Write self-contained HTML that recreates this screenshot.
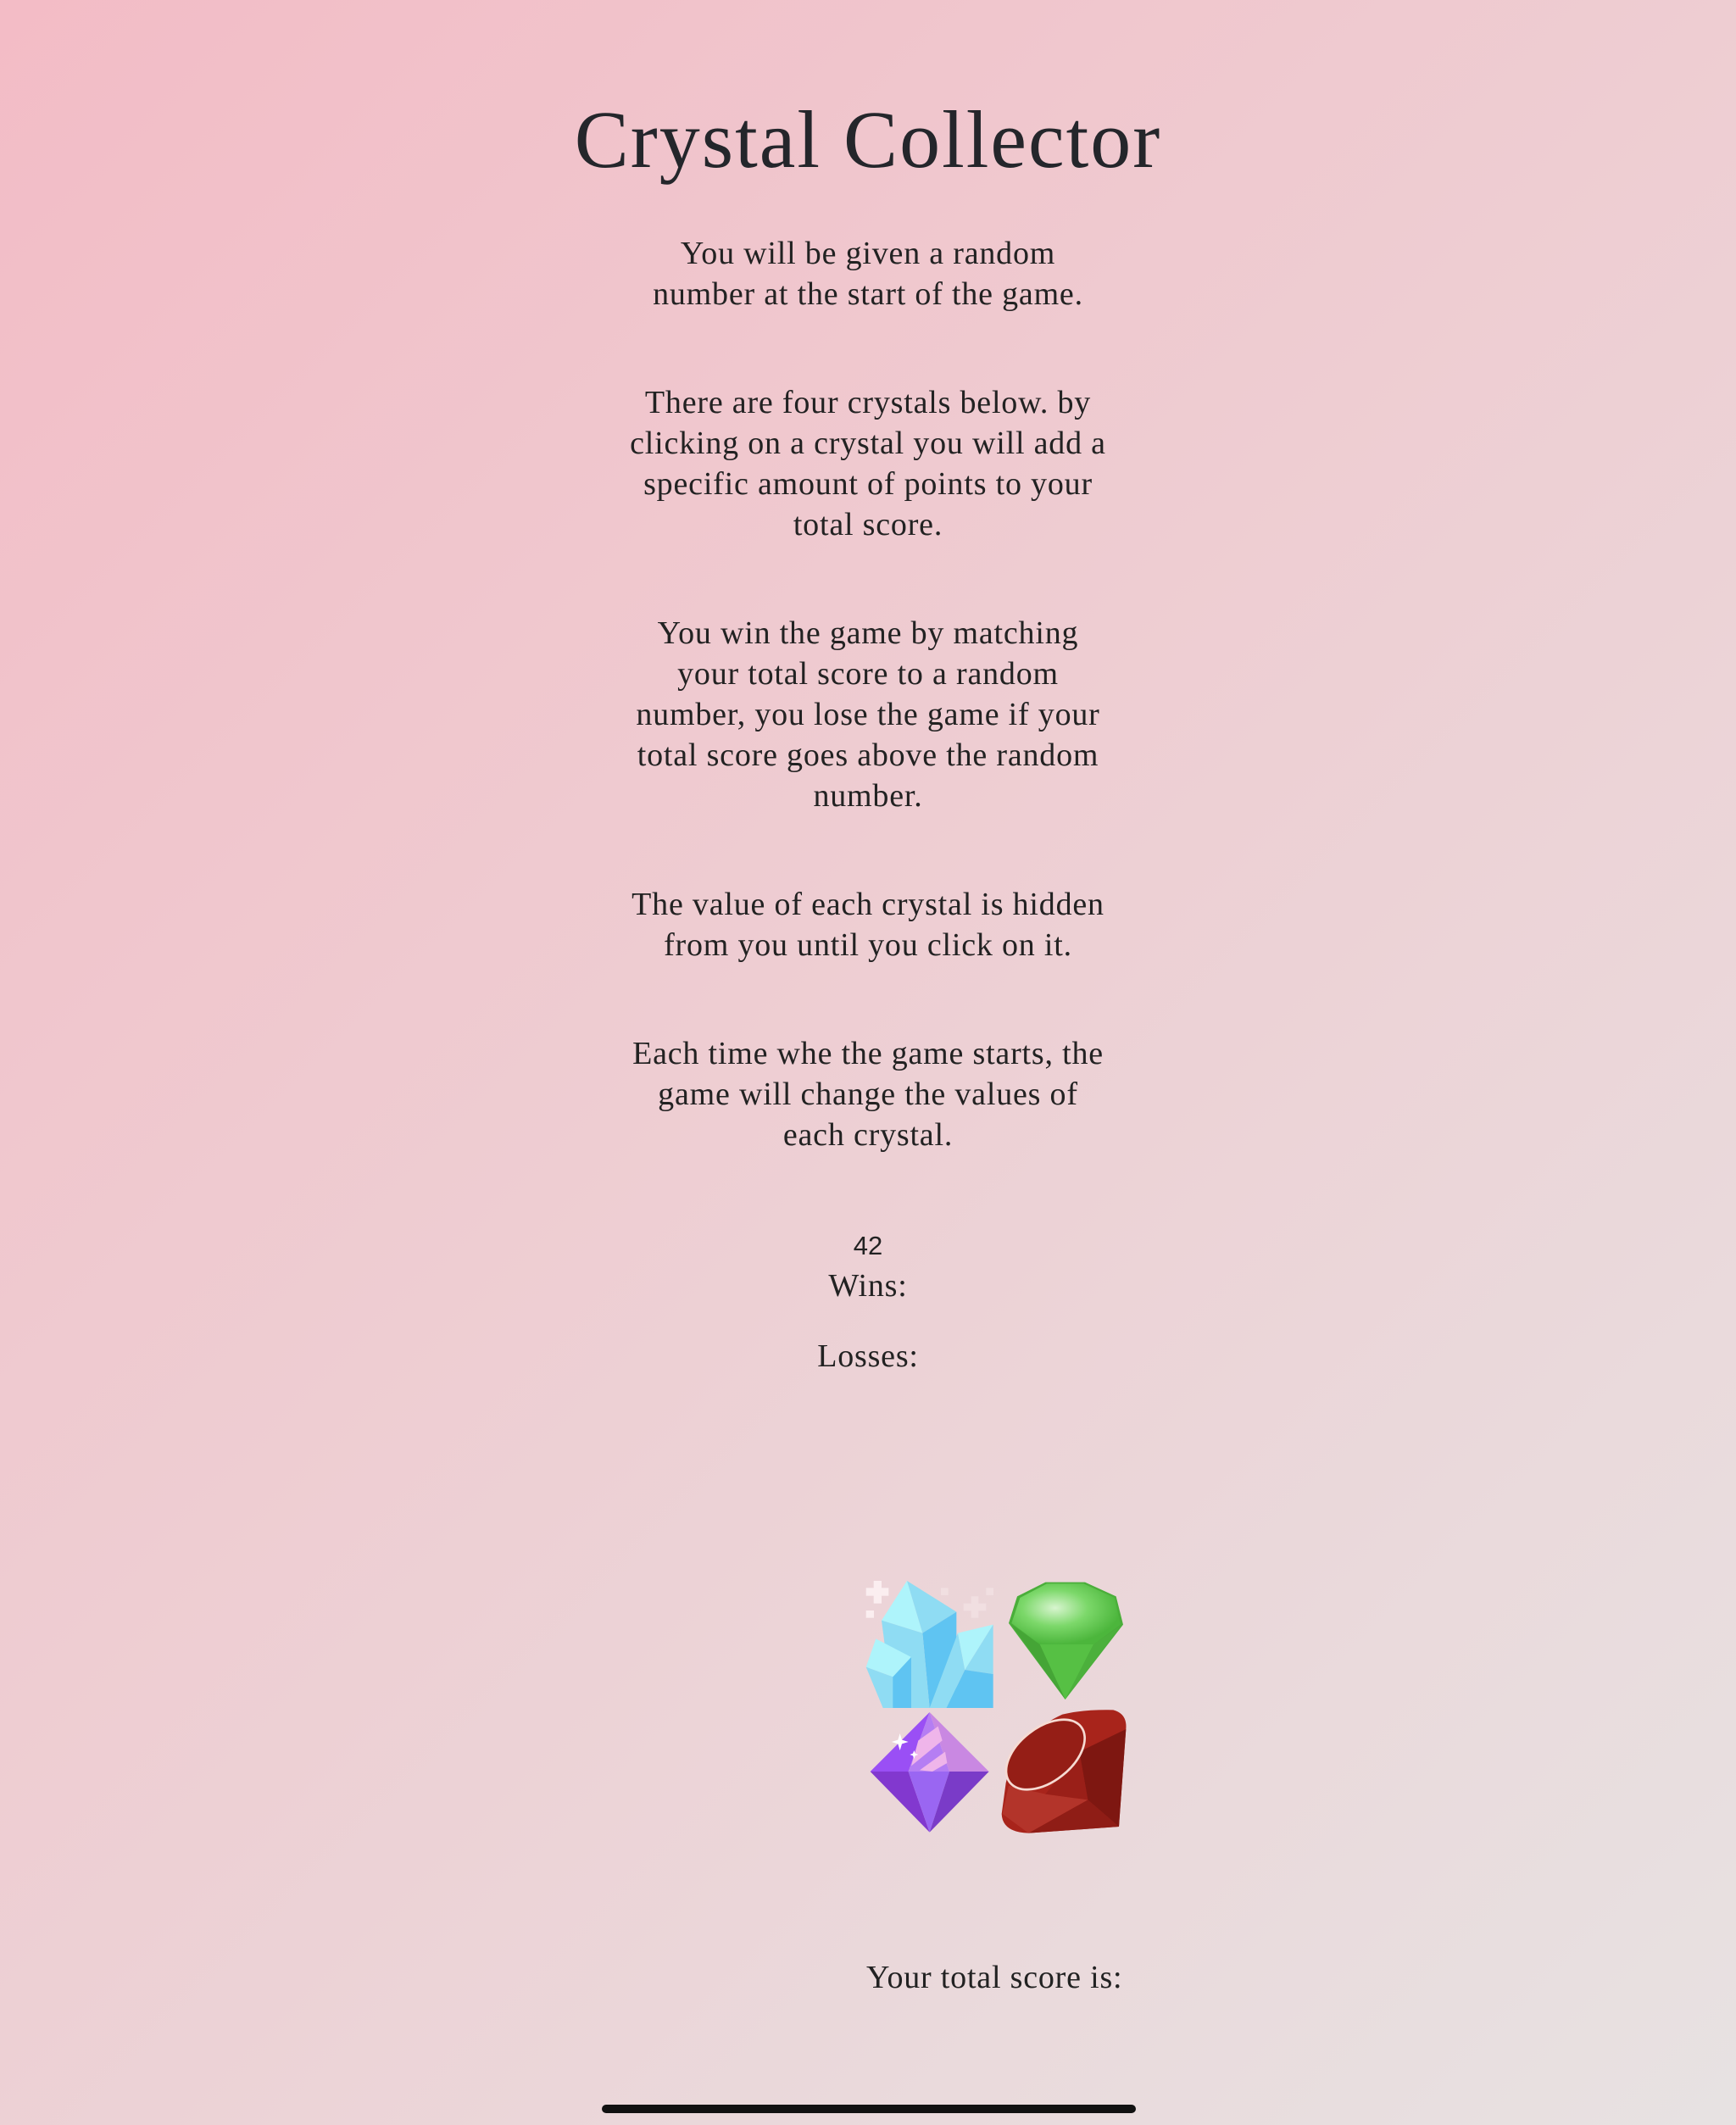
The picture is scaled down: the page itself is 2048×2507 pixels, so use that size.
<!DOCTYPE html>
<html><head><meta charset="utf-8"><style>
html,body{margin:0;padding:0}
body{width:2048px;height:2507px;position:relative;overflow:hidden;background:linear-gradient(135deg,#f3bcc6 0%,#eecdd2 45%,#e7e2e2 100%);font-family:"Liberation Serif",serif;color:#222;}
.c{position:absolute;left:0;width:2048px;text-align:center;white-space:nowrap}
.p{font-size:38px;line-height:48px;letter-spacing:0.8px}
h1{margin:0;font-weight:normal;font-size:96px;line-height:110px;color:#24262b;letter-spacing:2px}
</style></head><body>
<h1 class="c" style="top:110px">Crystal Collector</h1>
<div class="c p" style="top:275px">You will be given a random<br>number at the start of the game.</div>
<div class="c p" style="top:451px">There are four crystals below. by<br>clicking on a crystal you will add a<br>specific amount of points to your<br>total score.</div>
<div class="c p" style="top:723px">You win the game by matching<br>your total score to a random<br>number, you lose the game if your<br>total score goes above the random<br>number.</div>
<div class="c p" style="top:1043px">The value of each crystal is hidden<br>from you until you click on it.</div>
<div class="c p" style="top:1219px">Each time whe the game starts, the<br>game will change the values of<br>each crystal.</div>
<div class="c" style="top:1452px;font-family:'Liberation Sans',sans-serif;font-size:31px;line-height:36px">42</div>
<div class="c p" style="top:1493px">Wins:</div>
<div class="c p" style="top:1576px">Losses:</div>

<svg style="position:absolute;left:1000px;top:1840px" width="360" height="340" viewBox="0 0 1080 1020">
 <defs>
  <radialGradient id="gg" cx="0.4" cy="0.4" r="0.6"><stop offset="0" stop-color="#d8f5cf"/><stop offset="0.5" stop-color="#7cd86a"/><stop offset="1" stop-color="#4cb63c"/></radialGradient>
 </defs>
 <g fill="#fbeef0">
  <rect x="65" y="100" width="80" height="28"/><rect x="92" y="75" width="28" height="80"/>
  <rect x="65" y="180" width="28" height="26"/>
 </g>
 <g fill="#f1dfe1">
  <rect x="410" y="155" width="80" height="26"/><rect x="437" y="130" width="26" height="76"/>
  <rect x="330" y="100" width="26" height="26"/><rect x="490" y="100" width="26" height="26"/>
 </g>
 <polygon points="120,215 210,75 265,260" fill="#aef4fb"/>
 <polygon points="210,75 385,185 265,260" fill="#8fdcf3"/>
 <polygon points="265,260 385,185 385,525 290,525" fill="#5fc4f2"/>
 <polygon points="120,215 265,260 290,525 160,525" fill="#8fdcf3"/>
 <polygon points="65,380 100,280 225,345 160,415" fill="#aef4fb"/>
 <polygon points="65,380 160,415 160,525 125,525" fill="#8fdcf3"/>
 <polygon points="160,415 225,345 225,525 160,525" fill="#5fc4f2"/>
 <polygon points="290,525 390,260 415,390 350,525" fill="#8fdcf3"/>
 <polygon points="390,260 515,230 415,390" fill="#aef4fb"/>
 <polygon points="515,230 515,405 415,390" fill="#8fdcf3"/>
 <polygon points="350,525 415,390 515,405 515,525" fill="#5fc4f2"/>
 <polygon points="570,225 600,130 700,80 840,80 950,130 975,230 770,495" fill="#4aae3a"/>
 <polygon points="580,225 610,135 705,85 835,85 945,135 965,230 870,300 680,300" fill="url(#gg)"/>
 <polygon points="680,300 870,300 770,495" fill="#56c044"/>
 <polygon points="580,230 680,300 770,495" fill="#45a536"/>
 <polygon points="965,235 870,300 770,495" fill="#4cb03c"/>
 <polygon points="290,540 80,750 215,750" fill="#9a4ff5"/>
 <polygon points="290,540 215,750 360,750" fill="#b57ef3"/>
 <polygon points="290,540 360,750 500,750" fill="#c988e2"/>
 <polygon points="80,750 215,750 290,965" fill="#8238cf"/>
 <polygon points="215,750 360,750 290,965" fill="#9a66f2"/>
 <polygon points="360,750 500,750 290,965" fill="#7a3bc8"/>
 <polygon points="250,640 320,590 335,640 225,730" fill="#efb5ea"/>
 <polygon points="255,745 345,680 352,720 300,750" fill="#efb5ea"/>
 <path d="M185,615 L192,638 L215,645 L192,652 L185,675 L178,652 L155,645 L178,638Z" fill="#fff"/>
 <path d="M235,675 L239,686 L250,690 L239,694 L235,705 L231,694 L220,690 L231,686Z" fill="#fff"/>
 <path d="M560,790 Q600,620 760,548 Q830,530 940,532 Q990,545 985,600 L960,945 L640,968 Q548,965 545,900 Z" fill="#a8241b"/>
 <polygon points="820,680 985,600 960,945 850,850" fill="#7e1711"/>
 <polygon points="850,850 960,945 640,968" fill="#8f1d16"/>
 <polygon points="570,800 700,830 850,850 640,968 548,900" fill="#b3342a"/>
 <polygon points="700,830 820,680 850,850" fill="#9a1f18"/>
 <ellipse cx="700" cy="690" rx="160" ry="95" transform="rotate(-38 700 690)" fill="#951e16" stroke="#f6dbd3" stroke-width="8"/>
</svg>

<div class="c p" style="left:1022px;width:auto;top:2309px">Your total score is:</div>
<div style="position:absolute;left:710px;top:2483px;width:630px;height:10px;border-radius:5px;background:#111"></div>
</body></html>
